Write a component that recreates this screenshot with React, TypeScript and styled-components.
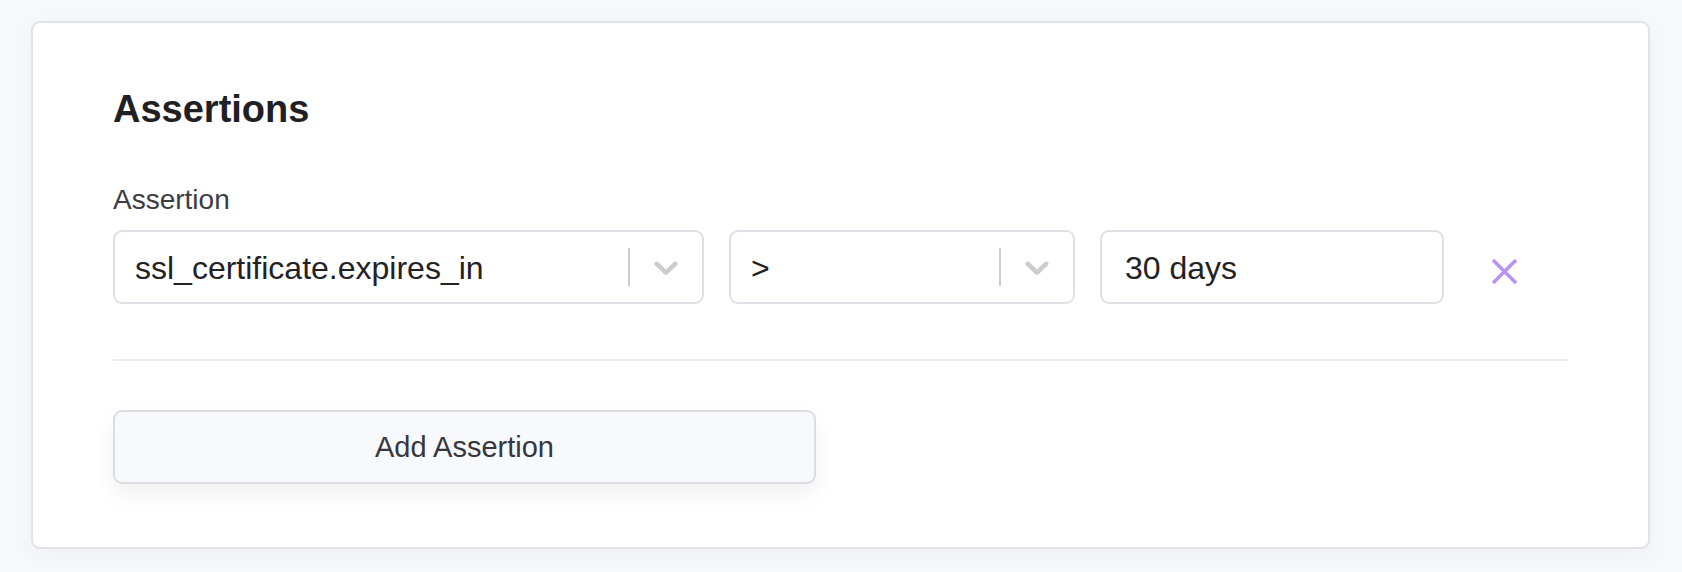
import React, { useState } from "react";
import styled, { createGlobalStyle } from "styled-components";

const GlobalStyle = createGlobalStyle`
  html, body {
    margin: 0;
    padding: 0;
    background-color: #f7f8fb;
    font-family: "Liberation Sans", Arial, Helvetica, sans-serif;
  }
  * {
    box-sizing: border-box;
  }
`;

const Page = styled.div`
  padding: 21px 32px 23px 31px;
  min-height: 572px;
`;

const Card = styled.section`
  background-color: #ffffff;
  border: 2px solid #e2e3e9;
  border-radius: 9px;
  box-shadow: 0 6px 24px rgba(30, 34, 60, 0.04);
  padding: 62px 80px 63px 80px;
`;

const Title = styled.h2`
  margin: 0 0 50px 0;
  font-size: 38px;
  line-height: 48px;
  font-weight: 700;
  color: #1f2024;
`;

const Label = styled.label`
  display: block;
  margin-bottom: 13px;
  font-size: 28px;
  line-height: 34px;
  color: #3c3c43;
`;

const Row = styled.div`
  display: flex;
  align-items: center;
  gap: 25px;
`;

const SelectBox = styled.div<{ $width: number }>`
  display: flex;
  align-items: center;
  width: ${(p) => p.$width}px;
  height: 74px;
  border: 2px solid #e0e1e7;
  border-radius: 9px;
  background-color: #fff;
  cursor: pointer;
`;

const Value = styled.div`
  flex: 1;
  padding: 3px 0 0 20px;
  font-size: 32px;
  color: #222226;
  white-space: nowrap;
  overflow: hidden;
`;

const Separator = styled.span`
  width: 2px;
  height: 38px;
  background-color: #cccccc;
`;

const Indicator = styled.span`
  display: flex;
  align-items: center;
  justify-content: center;
  width: 72px;
  height: 100%;
  color: #cccccc;
`;

const TextInput = styled.input<{ $width: number }>`
  width: ${(p) => p.$width}px;
  height: 74px;
  border: 2px solid #e0e1e7;
  border-radius: 9px;
  padding: 3px 20px 0 23px;
  font-family: inherit;
  font-size: 32px;
  color: #222226;
  outline: none;
`;

const RemoveButton = styled.button`
  display: flex;
  align-items: center;
  justify-content: center;
  width: 60px;
  height: 60px;
  margin: 9px 0 0 5px;
  padding: 0;
  border: none;
  background: none;
  color: #b794f4;
  cursor: pointer;
`;

const Divider = styled.hr`
  margin: 55px 0 49px 0;
  border: none;
  height: 2px;
  background-color: #ececf1;
`;

const AddButton = styled.button`
  width: 703px;
  height: 74px;
  border: 2px solid #dcdde3;
  border-radius: 9px;
  background-color: #f8f9fc;
  box-shadow: 0 10px 22px rgba(0, 0, 0, 0.06);
  font-family: inherit;
  font-size: 29px;
  color: #36363d;
  cursor: pointer;
`;

function Chevron() {
  return (
    <svg width="40" height="40" viewBox="0 0 20 20" fill="currentColor">
      <path d="M4.516 7.548c0.436-0.446 1.043-0.481 1.576 0l3.908 3.747 3.908-3.747c0.533-0.481 1.141-0.446 1.574 0 0.436 0.445 0.408 1.197 0 1.615-0.406 0.418-4.695 4.502-4.695 4.502-0.217 0.223-0.502 0.335-0.787 0.335s-0.57-0.112-0.789-0.335c0 0-4.287-4.084-4.695-4.502s-0.436-1.17 0-1.615z" />
    </svg>
  );
}

function Select({ value, width }: { value: string; width: number }) {
  return (
    <SelectBox $width={width}>
      <Value>{value}</Value>
      <Separator />
      <Indicator>
        <Chevron />
      </Indicator>
    </SelectBox>
  );
}

export default function App() {
  const [amount, setAmount] = useState("30 days");

  return (
    <Page>
      <GlobalStyle />
      <Card>
        <Title>Assertions</Title>
        <Label>Assertion</Label>
        <Row>
          <Select value="ssl_certificate.expires_in" width={591} />
          <Select value=">" width={346} />
          <TextInput
            $width={344}
            value={amount}
            onChange={(e) => setAmount(e.target.value)}
          />
          <RemoveButton aria-label="Remove assertion">
            <svg width="27" height="27" viewBox="0 0 27 27">
              <path
                d="M2 2 L25 25 M25 2 L2 25"
                stroke="currentColor"
                strokeWidth="3.6"
                strokeLinecap="butt"
              />
            </svg>
          </RemoveButton>
        </Row>
        <Divider />
        <AddButton>Add Assertion</AddButton>
      </Card>
    </Page>
  );
}
